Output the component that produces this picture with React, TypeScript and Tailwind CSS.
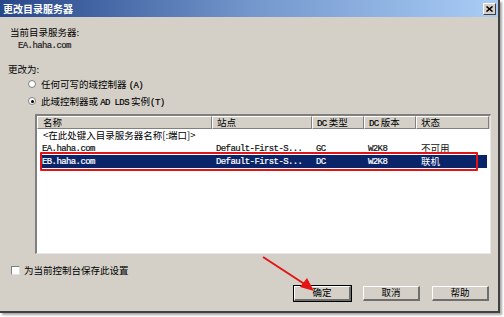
import { useState } from 'react'

const cjk = '[font-family:"Noto_Sans_CJK_SC",sans-serif]'
const mono = '[font-family:"Liberation_Mono","Noto_Sans_CJK_SC",monospace]'

const rows = [
  { name: 'EA.haha.com', site: 'Default-First-S...', type: 'GC', ver: 'W2K8', status: '不可用' },
  { name: 'EB.haha.com', site: 'Default-First-S...', type: 'DC', ver: 'W2K8', status: '联机' },
]

// ASCII in the dialog is drawn half-width, so it gets its own narrow mono span
function Latin({ children, inline }: { children: string; inline?: boolean }) {
  return (
    <span
      className={`${mono} text-[9px] tracking-[-0.6px] font-medium [-webkit-text-stroke:0.2px_currentColor] ${
        inline ? 'align-baseline leading-none' : 'align-top leading-[14px]'
      }`}
    >
      {children}
    </span>
  )
}

function Radio({ checked, children }: { checked?: boolean; children: React.ReactNode }) {
  return (
    <div className="flex items-center gap-[5px] pl-[20px] h-[12px] overflow-visible">
      <span className="w-[8px] h-[8px] rounded-full bg-white border border-[#808080] flex items-center justify-center">
        {checked && <span className="w-[3px] h-[3px] rounded-full bg-black" />}
      </span>
      <span className="h-[12px] text-[9.5px] leading-[12px] text-black whitespace-nowrap">{children}</span>
    </div>
  )
}

function Button({ label, isDefault }: { label: string; isDefault?: boolean }) {
  return (
    <div
      className={`w-[59px] h-[17px] flex items-center justify-center bg-[#d4d0c8] text-[9.5px] text-black border ${
        isDefault ? 'border-black' : 'border-[#d4d0c8]'
      }`}
    >
      <div className="w-full h-full flex items-center justify-center leading-none border-t border-l border-white border-r-2 border-b-2 border-r-[#6e6e6e] border-b-[#6e6e6e]">
        {label}
      </div>
    </div>
  )
}

const head = 'h-[13px] border-r border-b border-r-[#808080] border-b-[#808080] border-t border-l border-white whitespace-nowrap overflow-hidden'

export default function App() {
  const [save, setSave] = useState(false)

  return (
    <div className={`relative w-[504px] h-[317px] bg-white ${cjk}`}>
      <div className="w-[500px] h-[313px] bg-[#d4d0c8] flex flex-col border-r-2 border-b-2 border-[#404040] shadow-[2px_2px_2px_rgba(0,0,0,0.35)]">
        {/* title bar */}
        <div className="h-[17px] shrink-0 flex items-center justify-between pl-[3px] pr-[2px] bg-gradient-to-r from-[#284789] via-[#7396cc] to-[#a9cdf5]">
          <span className="text-white font-bold text-[10px] leading-none">更改目录服务器</span>
          <div className="w-[13px] h-[12px] bg-[#d4d0c8] border-t border-l border-white border-r border-b border-r-[#404040] border-b-[#404040] flex items-center justify-center">
            <svg width="7" height="6" viewBox="0 0 7 6">
              <path d="M0.5 0.5 L6.5 5.5 M6.5 0.5 L0.5 5.5" stroke="#000" strokeWidth="1.6" />
            </svg>
          </div>
        </div>

        <div className="flex flex-col pl-[8px]">
          <div className="mt-[9px] h-[12px] pl-[2px] text-[9.5px] leading-[12px] text-black">当前目录服务器:</div>
          <div className="mt-[1px] h-[12px] pl-[10px] leading-[12px] text-[#222]">
            <Latin>EA.haha.com</Latin>
          </div>
          <div className="mt-[12px] h-[12px] text-[9.5px] leading-[12px] text-black">更改为:</div>
          <div className="mt-[3px]">
            <Radio>
              任何可写的域控制器 <Latin inline>(A)</Latin>
            </Radio>
          </div>
          <div className="mt-[5px]">
            <Radio checked>
              此域控制器或 <Latin inline>AD LDS</Latin> 实例<Latin inline>(T)</Latin>
            </Radio>
          </div>

          {/* list view */}
          <div className="mt-[7px] ml-[27px] w-[456px] h-[140px] bg-white border-t-2 border-l-2 border-t-[#808080] border-l-[#808080] border-r border-b border-r-[#e8e8e8] border-b-[#e8e8e8] flex flex-col">
            <div className="flex h-[13px] shrink-0 bg-[#d4d0c8] text-[9.5px] leading-[11px] text-black">
              <div className={`w-[175px] pl-[5px] ${head}`}>名称</div>
              <div className={`w-[100px] pl-[4px] ${head}`}>站点</div>
              <div className={`w-[52px] pl-[4px] ${head}`}>
                <Latin inline>DC</Latin> 类型
              </div>
              <div className={`w-[52px] pl-[4px] ${head}`}>
                <Latin inline>DC</Latin> 版本
              </div>
              <div className={`w-[73px] pl-[4px] ${head}`}>状态</div>
              <div className="flex-1" />
            </div>
            <div className="h-[13px] shrink-0 pl-[6px] text-[9.5px] leading-[13px] text-black whitespace-nowrap overflow-hidden">
              &lt;在此处键入目录服务器名称[:端口]&gt;
            </div>
            {rows.map((r, i) => (
              <div
                key={r.name}
                className={`flex h-[13px] shrink-0 items-center leading-[13px] text-[9.5px] mx-[3px] overflow-hidden ${
                  i === 1 ? 'bg-[#0a246a] text-white' : 'text-[#111]'
                }`}
              >
                <div className="w-[172px] h-[13px] pl-[2px]"><Latin>{r.name}</Latin></div>
                <div className="w-[100px] h-[13px] pl-[4px]"><Latin>{r.site}</Latin></div>
                <div className="w-[52px] h-[13px] pl-[4px]"><Latin>{r.type}</Latin></div>
                <div className="w-[52px] h-[13px] pl-[4px]"><Latin>{r.ver}</Latin></div>
                <div className="w-[70px] h-[13px] pl-[5px]">{r.status}</div>
              </div>
            ))}
          </div>

          <div className="mt-[10px] flex items-center gap-[4px] pl-[3px] h-[12px]" onClick={() => setSave(!save)}>
            <span className="w-[9px] h-[9px] bg-white border-t border-l border-[#808080] border-r border-b border-r-[#e0e0e0] border-b-[#e0e0e0]">
              {save && <span className="block text-[7px] leading-[7px]">✓</span>}
            </span>
            <span className="text-[9.5px] leading-[12px] text-black">为当前控制台保存此设置</span>
          </div>

          <div className="mt-[9px] flex justify-end gap-[10px] pr-[8px]">
            <Button label="确定" isDefault />
            <Button label="取消" />
            <Button label="帮助" />
          </div>
        </div>
      </div>

      {/* annotation: red box */}
      <div className="absolute left-[40px] top-[152px] w-[438px] h-[19px] border-2 border-[#e41414] rounded-[1px]" />

      {/* annotation: red arrow */}
      <svg className="absolute left-0 top-0 pointer-events-none" width="504" height="317">
        <line x1="263" y1="257" x2="306" y2="285" stroke="#e41414" strokeWidth="2" />
        <path d="M314 291 L300 287 L307 278 Z" fill="#e41414" />
      </svg>
    </div>
  )
}
